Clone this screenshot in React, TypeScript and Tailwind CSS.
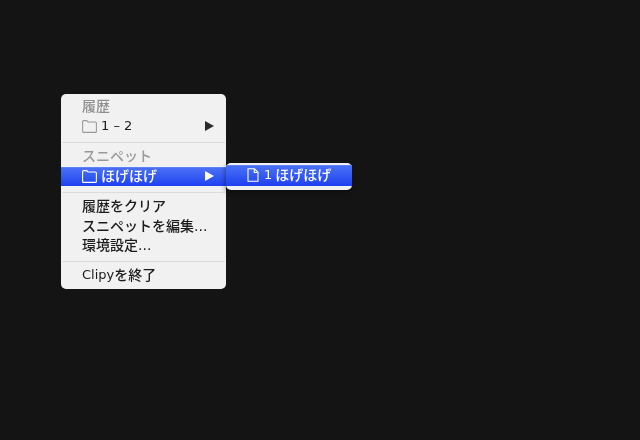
function FolderIcon({ color }: { color: string }) {
  return (
    <svg width="15" height="13" viewBox="0 0 15 13" fill="none" stroke={color} strokeWidth="1.1" className="shrink-0">
      <path d="M0.6 1.6 C0.6 1 1 0.6 1.6 0.6 H4.8 L6 2 H13.4 C14 2 14.4 2.4 14.4 3 V11.4 C14.4 12 14 12.4 13.4 12.4 H1.6 C1 12.4 0.6 12 0.6 11.4 Z" />
    </svg>
  );
}

function DocIcon() {
  return (
    <svg width="12" height="14" viewBox="0 0 12 14" fill="none" stroke="#ffffff" strokeWidth="1.1" className="shrink-0">
      <path d="M1 0.8 H7.5 L11 4.3 V13.2 H1 Z" />
      <path d="M7.3 1 V4.5 H10.8" />
    </svg>
  );
}

function Arrow({ color, top = "top-[5px]" }: { color: string; top?: string }) {
  return (
    <svg width="9" height="10" viewBox="0 0 9 10" className={`absolute left-[144px] ${top}`}>
      <path d="M0 0 L9 5 L0 10 Z" fill={color} />
    </svg>
  );
}

function Separator() {
  return <div className="mt-[5.5px] mb-[3.5px] h-px bg-[#dcdcdc] mx-px" />;
}

function Row({ children, className = "" }: { children: React.ReactNode; className?: string }) {
  return <div className={`relative flex items-center h-5 pl-[21px] ${className}`}>{children}</div>;
}

export default function App() {
  return (
    <div className="relative h-[440px] w-[640px] overflow-hidden bg-[#141414] pl-[61px] pt-[94px] font-['DejaVu_Sans','Noto_Sans_CJK_JP',sans-serif] text-[14px] font-medium text-[#1b1b1b] [filter:blur(0.35px)]">
      <div className="relative w-[165px] h-[195px] rounded-[5px] bg-[#f1f1f1] pt-[2px]">
        <Row className="text-[#8f8f8f]">履歴</Row>
        <Row>
          <FolderIcon color="#9a9a9a" />
          <span className="ml-[4px] text-[13px]">1 – 2</span>
          <Arrow color="#2a2a2a" />
        </Row>
        <Separator />
        <Row className="text-[#9a9a9a]">スニペット</Row>
        <Row className="mt-px !h-[19px] pb-[2px] text-white bg-gradient-to-b from-[#4a6ff5] to-[#1f3ff0] border-t border-[#5f83f7]">
          <FolderIcon color="#ffffff" />
          <span className="ml-[4px]">ほげほげ</span>
          <Arrow color="#ffffff" top="top-[3px]" />
        </Row>
        <Separator />
        <Row>履歴をクリア</Row>
        <Row>スニペットを編集...</Row>
        <Row className="!h-[19px]">環境設定...</Row>
        <Separator />
        <Row>
          <span className="text-[13px]">Clipy</span>
          <span>を終了</span>
        </Row>
        <div className="absolute left-[165px] top-[69px] w-[126px] h-[27px] rounded-[5px] bg-[#f1f1f1] pt-[2px] shadow-[-1px_2px_5px_rgba(0,0,0,0.4)]">
          <div className="flex items-center h-[21px] pl-[21px] pb-[2px] text-white bg-gradient-to-b from-[#4a6ff5] to-[#1f3ff0] border-t border-[#5f83f7]">
            <DocIcon />
            <span className="ml-[5px] text-[13px]">1</span>
            <span className="ml-[3px]">ほげほげ</span>
          </div>
        </div>
      </div>
    </div>
  );
}
